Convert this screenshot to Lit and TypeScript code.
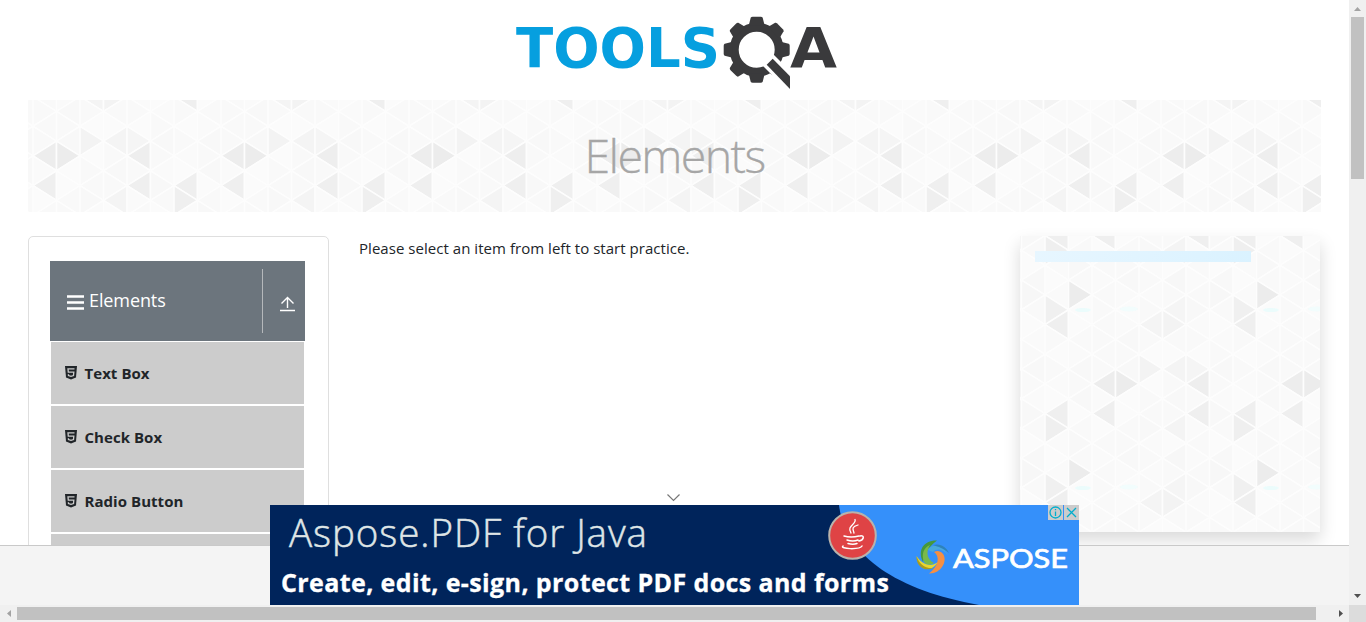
import { LitElement, html, css, svg } from "lit";
import { customElement } from "lit/decorators.js";

const TILE_W = 188;
const TILE_H = 178;
// Grey level of each triangle: one row per strip, twelve triangles down.
const SHADES: string[] = [
  "f8 f9 fb f8 f7 f9 fb fa f9 f8 f9 fa",
  "ef ef fa fb fa f0 ef f9 fb f9 fa fb",
  "fb f9 f8 f9 ec fb fb f9 fa f8 f9 f8",
  "ef fb f9 fa f9 f9 f9 f9 f9 f9 ed fa",
  "fb f9 f9 f8 fa fb fa f8 f9 f8 ec fb",
  "f9 f8 fa f9 fa f9 f4 f9 fb f3 fb f9",
  "f9 f4 fb f7 f9 f5 f3 f9 fb f4 f9 f8",
  "ef fa f9 fa f9 f8 fa f9 fb f5 ee f9",
];

function tile() {
  const cw = TILE_W / 8;
  const h = TILE_H / 12;
  let shapes = "";
  for (let k = -1; k < 9; k++) {
    for (let m = -1; m < 14; m++) {
      const kk = (k + 8) % 8;
      const s = SHADES[kk].split(" ")[(m + 12) % 12];
      const x0 = 1.5 + k * cw;
      const x1 = x0 + cw;
      const y = -0.4 + m * h;
      const left = (kk + m + 12) % 2 === 1;
      const a = left ? x0 : x1;
      const b = left ? x1 : x0;
      shapes += `<path d='M${a} ${y}L${b} ${y - h}V${y + h}Z' fill='%23${s}${s}${s}'/>`;
    }
  }
  return `url("data:image/svg+xml,<svg xmlns='http://www.w3.org/2000/svg' width='${TILE_W}' height='${TILE_H}'><g stroke='%23fdfdfd' stroke-width='1.6' stroke-linejoin='round'>${shapes}</g><g fill='%23e4fdfd' opacity='.7'><ellipse cx='63' cy='74' rx='8' ry='2'/><ellipse cx='109' cy='73' rx='9' ry='2.5' opacity='.6'/></g></svg>")`;
}

const gearTeeth = [0, 45, 90, 135, 180, 225, 270, 315];

@customElement("app-root")
export class AppRoot extends LitElement {
  static styles = css`
    :host { display: block; width: 1366px; height: 622px; overflow: hidden; background: #fff; font-family: "Open Sans", "Noto Sans", sans-serif; color: #212529; }
    * { box-sizing: border-box; }
    .window { display: grid; grid-template: 605px 17px / 1349px 17px; position: relative; }
    .page { overflow: hidden; padding: 0 28px; }
    .logo { display: block; margin: 0 0 0 478px; }
    .banner { width: 1293px; height: 112px; background-position: 121px 86px; display: flex; justify-content: center; }
    .banner-title { font-size: 46.500px; font-weight: 300; line-height: 110px; color: #a6a6a6; letter-spacing: -1.600px; -webkit-text-stroke: .3px #a6a6a6; }
    .columns { display: flex; align-items: flex-start; margin-top: 24px; }
    .side { width: 301px; height: 400px; border: 1px solid #dfdfdf; border-radius: 5px; padding: 24px 23px 0 21px; }
    .group { height: 80px; background: #6c757d; color: #fff; display: flex; align-items: center; padding-left: 17px; }
    .group-icon { margin: 3px 5px 0 0; }
    .group-name { font-size: 18px; letter-spacing: -.1px; flex: 1; line-height: 24px; padding-bottom: 3px; }
    .toggle { height: 64px; width: 43px; border-left: 1px solid #b5b8bb; display: flex; align-items: center; justify-content: center; padding: 6px 0 0 7px; }
    .item { height: 62px; background: #ccc; margin: 1px 1px 2px; display: flex; align-items: center; padding-left: 14px; font-size: 15px; font-weight: 700; letter-spacing: .05px; }
    .item + .item { margin-top: 0; }
    .item-icon { margin-right: 7.500px; }
    .hint { width: 661px; margin-left: 30px; font-size: 15px; line-height: 24px; letter-spacing: .04px; }
    .panel { width: 300px; height: 296px; box-shadow: 0 8px 16px rgba(0,0,0,.15); padding: 15px; }
    .placeholder { width: 216px; height: 11px; background: linear-gradient(100deg, #e7f6ff, #daf2ff); }
    .anchor { position: absolute; left: 0; top: 545px; width: 1349px; height: 60px; background: #f4f4f4; border-top: 1px solid #c9c9c9; }
    .collapse { position: absolute; left: 666px; top: 493px; }
    .ad { position: absolute; left: 270px; top: 505px; }
    .vbar { background: #f0f0f0; display: flex; flex-direction: column; align-items: center; }
    .vthumb { width: 13px; height: 162px; background: #c1c1c1; margin-bottom: auto; }
    .hbar { background: #f0f0f0; display: flex; align-items: center; }
    .hthumb { height: 13px; width: 1299px; background: #c1c1c1; margin-right: auto; }
    .corner { background: #dcdcdc; }
  `;

  private arrow(d: string, fill: string) {
    return html`<svg width="17" height="17"><path d=${d} fill=${fill} /></svg>`;
  }

  private logo() {
    return html`<svg class="logo" width="340" height="100" viewBox="506 0 340 100">
      <g font-family="DejaVu Sans" font-weight="700">
        <text x="516" y="66.500" font-size="55" fill="#069fdf" textLength="204" lengthAdjust="spacingAndGlyphs">TOOLS</text>
        <text x="790" y="67" font-size="56" fill="#3a3a3c" textLength="47" lengthAdjust="spacingAndGlyphs">A</text>
      </g>
      <g fill="#3a3a3c" transform="translate(756.700 49.700)">
        <circle r="22.500" fill="none" stroke="#3a3a3c" stroke-width="9" />
        ${gearTeeth.map((a) => svg`<path transform="rotate(${a})" d="M-8-24L-6-32Q-5.500-33-4-33H4Q5.500-33 6-32L8-24Z" />`)}
      </g>
      <path d="M768 49L790 71V93L760 63Z" fill="#fff" />
      <path d="M772.700 58.700L790 76.300V89L766.700 64.700Z" fill="#3a3a3c" />
    </svg>`;
  }

  private html5() {
    return html`<svg class="item-icon" width="12" height="14" viewBox="0 0 12 14">
      <path d="M0 0H12L11 11.500L6 13.500L1 11.500Z" fill="#212529" />
      <path d="M9.500 2.800H3L3.300 6.200H8.800L8.500 9.500L6 10.300L3.500 9.500L3.400 8.300" fill="none" stroke="#ccc" stroke-width="1.300" />
    </svg>`;
  }

  private ad() {
    return html`<svg class="ad" width="809" height="100">
      <rect width="809" height="100" fill="#00245b" />
      <path d="M569 0C575 50 625 85 709 100H809V0Z" fill="#3590fa" />
      <g font-family="Open Sans">
        <text x="19" y="42" font-size="38.500" font-weight="300" fill="#dfe5e6" stroke="#dfe5e6" stroke-width=".5" textLength="358">Aspose.PDF for Java</text>
        <text x="11" y="86.500" font-size="25" font-weight="700" fill="#fff" stroke="#fff" stroke-width=".3" textLength="608">Create, edit, e-sign, protect PDF docs and forms</text>
      </g>
      <text x="683" y="62.500" font-family="Lato" font-size="26.500" font-weight="400" fill="#fff" stroke="#fff" stroke-width=".7" textLength="115" lengthAdjust="spacingAndGlyphs">ASPOSE</text>
      <circle cx="582.500" cy="30.500" r="23.300" fill="#df4345" stroke="#b9b3ac" stroke-width="2" />
      <g fill="none" stroke="#fff" stroke-linecap="round">
        <path d="M585 14.500C587 19 576 21 581 28M588 20C581 22 583 24 584 28" stroke-width="1.300" />
        <path d="M574 31Q581 33 589 31M577 35Q583 37 588 35M578 38.500Q583 40 587 38.500M590 31C595 30 594 35 589 36M573 41C569 44 590 45 592 41" stroke-width="1.500" />
      </g>
      <path d="M667 35.500C654 35 647 45 653 57C655 49 657 43 667 35.500Z" fill="#46983c" />
      <path d="M654 57C651 49 654 42 660 40C655 48 658 55 664 58C660 61 656 60 654 57Z" fill="#79b94b" />
      <path d="M646.500 51C648 65 660 69 668 57C660 63 652 59 646.500 51Z" fill="#e8d72f" />
      <path d="M646.500 51C646 62 655 67 664 63C655 64 649 59 646.500 51Z" fill="#a99b20" />
      <path d="M664 47C670 51 669 61 659 68.500C671 69 678 56 673 49C670 45.500 667 45.500 664 47Z" fill="#f58f43" />
      <path d="M658 44C665 37 674 42 678 50C672 44 667 43 663 47C661 46 659 46 658 44Z" fill="#48a9dc" />
      <path d="M663 40C671 38 676 42 679 48C673 43 669 42 663 40Z" fill="#2e83ba" />
      <path d="M778 0H793V15H778ZM794 0H809V15H794Z" fill="#ccc" />
      <g fill="none" stroke="#00aecd" stroke-width="1.300"><circle cx="785.500" cy="7.500" r="5.500" /><path d="M785.500 4V5.300M785.500 6.500V11M797 3L806 12M806 3L797 12" /></g>
    </svg>`;
  }

  render() {
    const bg = `background-image:${tile()}`;
    return html`<div class="window">
      <main class="page">
        ${this.logo()}
        <div class="banner" style=${bg}><div class="banner-title">Elements</div></div>
        <div class="columns">
          <nav class="side">
            <div class="group">
              <svg class="group-icon" width="17" height="15"><path d="M0 1.500H17M0 7.500H17M0 13.500H17" stroke="#fff" stroke-width="2.600" /></svg>
              <span class="group-name">Elements</span>
              <span class="toggle"><svg width="15" height="16" fill="none" stroke="#fff" stroke-width="1.400"><path d="M7.500 12V1.500M1.500 7.500L7.500 1.500L13.500 7.500M0 14.500H15" /></svg></span>
            </div>
            ${["Text Box", "Check Box", "Radio Button", "Web Tables"].map((t) => html`<div class="item">${this.html5()}<span>${t}</span></div>`)}
          </nav>
          <div class="hint">Please select an item from left to start practice.</div>
          <aside class="panel" style=${bg}><div class="placeholder"></div></aside>
        </div>
      </main>
      <div class="vbar">${this.arrow("M5 11H12L8.500 7Z", "#a3a3a3")}<div class="vthumb"></div>${this.arrow("M5 6H12L8.500 10Z", "#505050")}</div>
      <div class="hbar">${this.arrow("M11 5V12L7 8.500Z", "#a3a3a3")}<div class="hthumb"></div>${this.arrow("M7 5V12L11 8.500Z", "#505050")}</div>
      <div class="corner"></div>
      <div class="anchor"></div>
      <svg class="collapse" width="15" height="9" fill="none" stroke="#777" stroke-width="1.200"><path d="M1.500 1.500L7.500 7.500L13.500 1.500" /></svg>
      ${this.ad()}
    </div>`;
  }
}
